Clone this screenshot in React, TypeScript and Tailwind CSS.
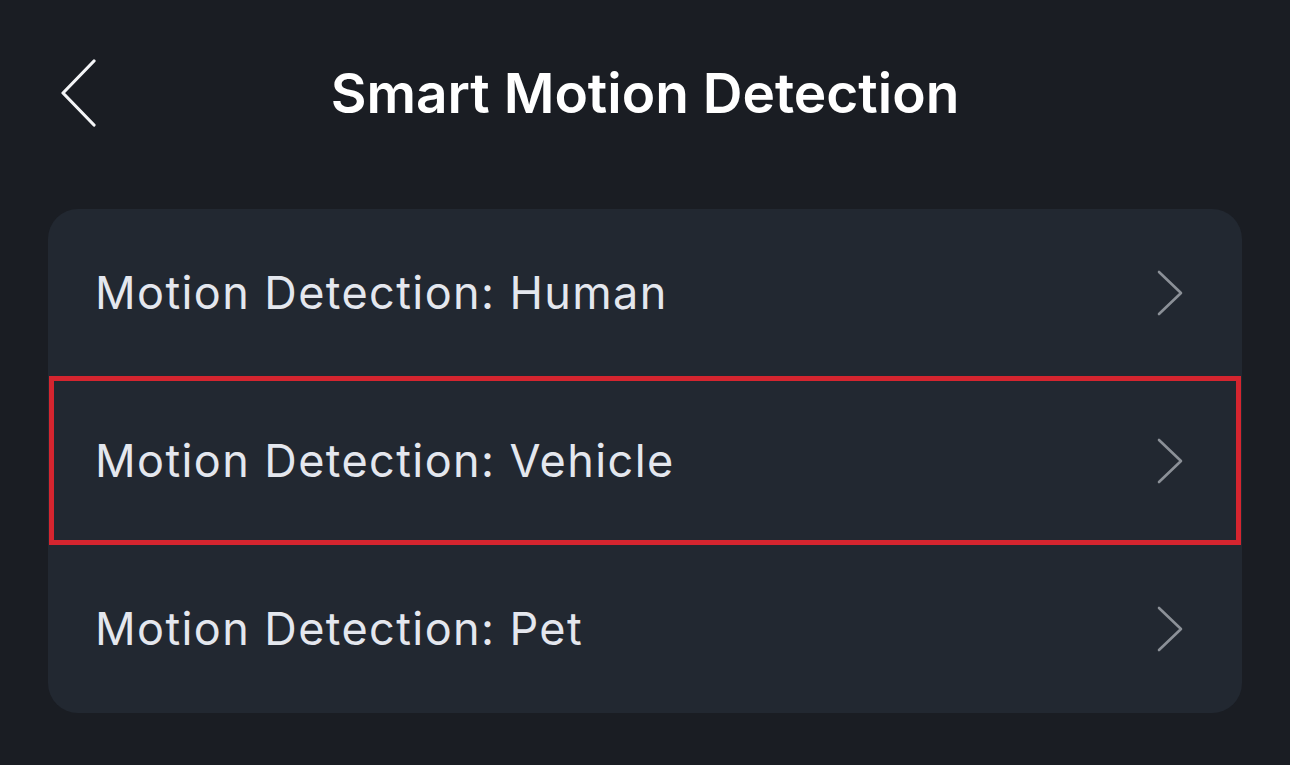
import React from "react";

const Chevron = () => (
  <svg width="28" height="46" viewBox="0 0 28 46" fill="none" className="shrink-0">
    <path d="M3 2 L25 23 L3 44" stroke="#8b9097" strokeWidth="2.6" strokeLinecap="round" strokeLinejoin="round" />
  </svg>
);

const Row = ({ label, highlight }: { label: string; highlight?: boolean }) => (
  <div className="relative flex h-[168px] items-center justify-between pl-[47px] pr-[58px]">
    <span className="text-[45px] font-normal text-[#e4e7ee] tracking-[1.4px]">{label}</span>
    <Chevron />
    {highlight && (
      <div className="pointer-events-none absolute left-[1px] right-[1px] top-[-1px] bottom-0 border-[5px] border-[#d5252f]" />
    )}
  </div>
);

export default function App() {
  return (
    <div
      className="h-[765px] w-[1290px] overflow-hidden bg-[#1a1d23]"
      style={{ fontFamily: "Inter, 'Noto Sans', sans-serif" }}
    >
      <div className="relative flex h-[186px] items-center px-[60px]">
        <svg width="38" height="68" viewBox="0 0 38 68" fill="none">
          <path d="M34 2 L3 34 L34 66" stroke="#f4f5f7" strokeWidth="3.2" strokeLinecap="round" strokeLinejoin="round" />
        </svg>
        <div className="absolute inset-0 flex items-center justify-center">
          <h1 className="text-[55px] font-semibold text-white tracking-[0px]">Smart Motion Detection</h1>
        </div>
      </div>
      <div className="mx-[48px] mt-[23px] overflow-hidden rounded-[30px] bg-[#222831]">
        <Row label="Motion Detection: Human" />
        <Row label="Motion Detection: Vehicle" highlight />
        <Row label="Motion Detection: Pet" />
      </div>
    </div>
  );
}
